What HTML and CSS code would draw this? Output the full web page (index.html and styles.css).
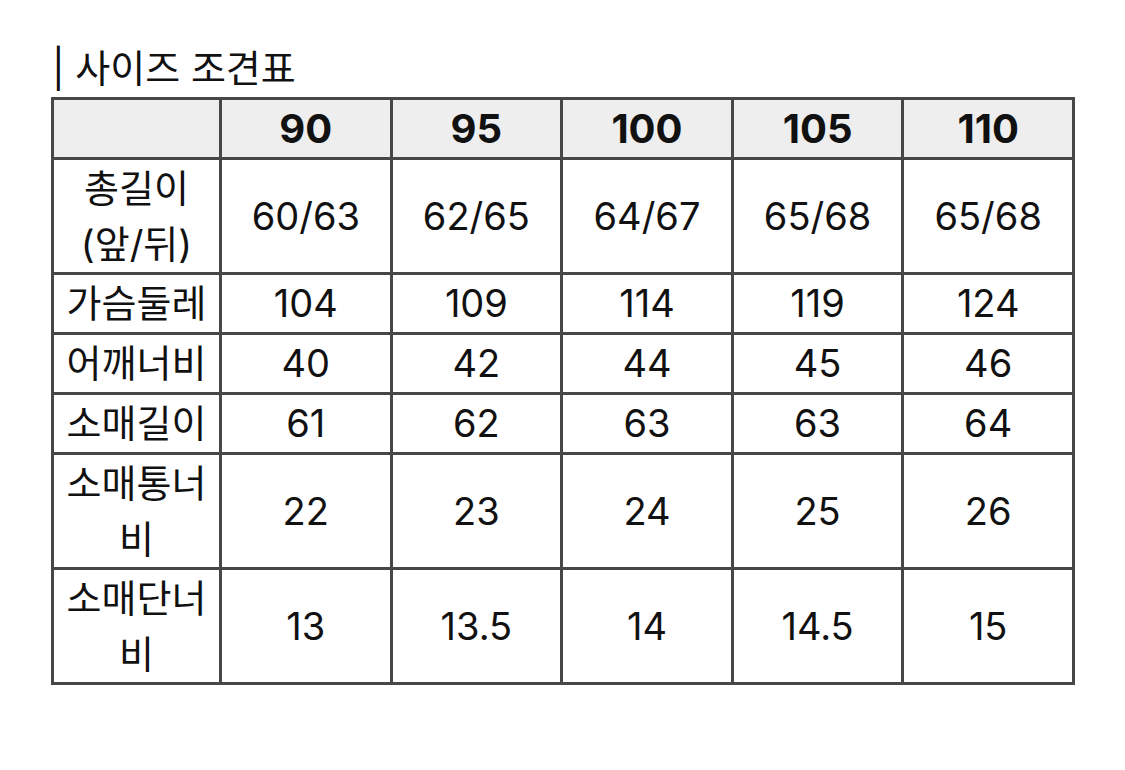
FILE: index.html
```html
<!DOCTYPE html>
<html lang="ko">
<head>
<meta charset="utf-8">
<link rel="stylesheet" href="styles.css">
</head>
<body>
<div class="page">
  <h2 class="title">| 사이즈 조견표</h2>
  <table class="size">
    <colgroup>
      <col class="c0"><col class="c"><col class="c"><col class="c"><col class="c"><col class="c">
    </colgroup>
    <thead>
      <tr><th></th><th>90</th><th>95</th><th>100</th><th>105</th><th>110</th></tr>
    </thead>
    <tbody>
      <tr class="two"><td>총길이<br>(앞/뒤)</td><td>60/63</td><td>62/65</td><td>64/67</td><td>65/68</td><td>65/68</td></tr>
      <tr><td>가슴둘레</td><td>104</td><td>109</td><td>114</td><td>119</td><td>124</td></tr>
      <tr><td>어깨너비</td><td>40</td><td>42</td><td>44</td><td>45</td><td>46</td></tr>
      <tr><td>소매길이</td><td>61</td><td>62</td><td>63</td><td>63</td><td>64</td></tr>
      <tr class="two"><td>소매통너<br>비</td><td>22</td><td>23</td><td>24</td><td>25</td><td>26</td></tr>
      <tr class="two"><td>소매단너<br>비</td><td>13</td><td>13.5</td><td>14</td><td>14.5</td><td>15</td></tr>
    </tbody>
  </table>
</div>
</body>
</html>
```
FILE: styles.css
```css
html, body {
  margin: 0;
  padding: 0;
  background: #ffffff;
}
body {
  font-family: Inter, "Noto Sans CJK KR", sans-serif;
  color: #111111;
}
.page {
  padding: 44px 0 0 51px;
}
.title {
  margin: 0 0 5px 1px;
  font-size: 38px;
  font-weight: 400;
  line-height: 48px;
  color: #111;
}
.size {
  border-collapse: collapse;
  table-layout: fixed;
  width: 1021px;
  border: 3px solid #474747;
}
.c0 { width: 168px; }
.c { width: 170.6px; }
.size th, .size td {
  border: 3px solid #474747;
  text-align: center;
  vertical-align: middle;
  padding: 0;
  font-size: 38px;
  line-height: 57px;
}
.size th {
  background: #eeeeee;
  font-weight: 700;
  font-size: 40px;
  height: 57px;
}
.size td {
  font-weight: 400;
}
.size .two td {
  line-height: 56px;
}
```
